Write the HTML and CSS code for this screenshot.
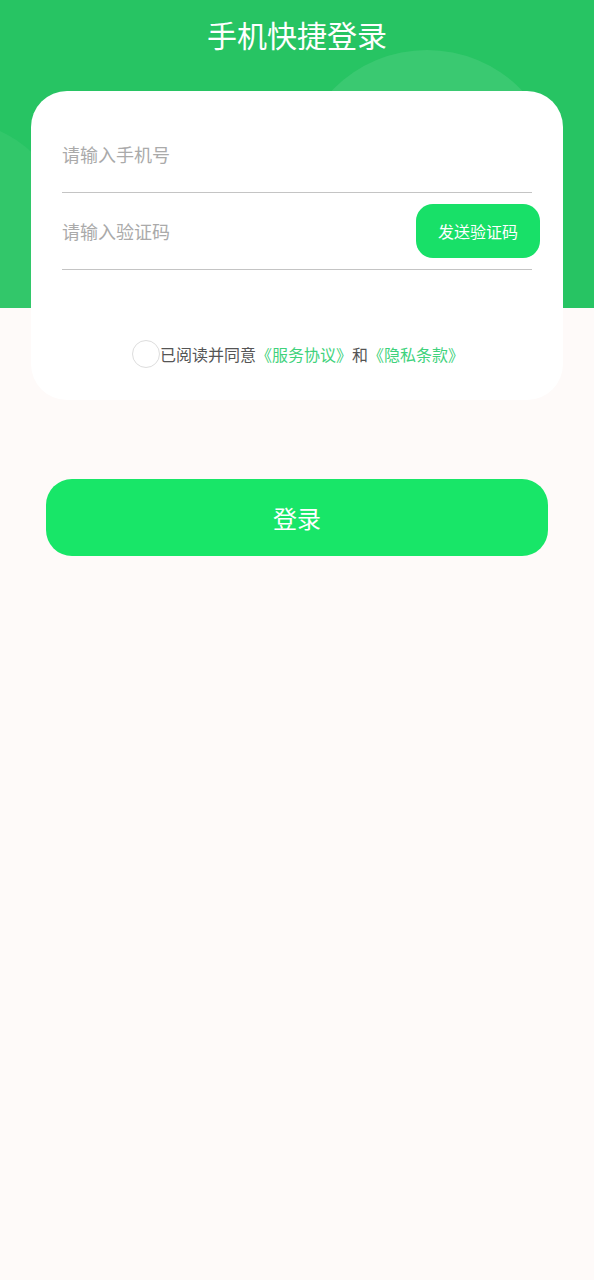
FILE: index.html
```html
<!DOCTYPE html>
<html lang="zh-CN">
<head>
    <meta charset="UTF-8">
    <meta name="viewport" content="width=device-width, initial-scale=1.0">
    <title>手机快捷登录</title>
    <link rel="stylesheet" href="styles.css">
</head>
<body>
    <header class="top">
        <span class="bubble bubble-right"></span>
        <span class="bubble bubble-left"></span>
        <h1>手机快捷登录</h1>
    </header>
    <main>
        <div class="card">
            <div class="field">
                <input type="text" placeholder="请输入手机号" />
            </div>
            <div class="field">
                <input type="text" placeholder="请输入验证码" />
                <button class="send-code">发送验证码</button>
            </div>
            <div class="agree">
                <span class="check"></span>
                <span>已阅读并同意<a href="#">《服务协议》</a>和<a href="#">《隐私条款》</a></span>
            </div>
        </div>
        <button class="login">登录</button>
    </main>
</body>
</html>
```

FILE: styles.css
```css
body {
    margin: 0;
    font-family: "Noto Sans CJK SC", "Noto Sans", sans-serif;
    background-color: #fefaf9;
}
.top {
    position: relative;
    height: 308px;
    background-color: #27c463;
    overflow: hidden;
}
.top h1 {
    position: relative;
    margin: 0;
    padding-top: 12px;
    text-align: center;
    color: white;
    font-size: 30px;
    font-weight: normal;
    line-height: 44px;
}
.bubble {
    position: absolute;
    border-radius: 50%;
    background: rgba(255,255,255,0.09);
}
.bubble-right {
    left: 295px;
    top: 50px;
    width: 264px;
    height: 264px;
}
.bubble-left {
    left: -170px;
    top: 120px;
    width: 240px;
    height: 240px;
    background: rgba(255,255,255,0.05);
}
main {
    position: relative;
    margin-top: -217px;
    padding: 0 31px;
}
.card {
    background: white;
    border-radius: 36px;
    padding: 25px 31px 34px;
    height: 250px;
}
.field {
    display: flex;
    align-items: center;
    height: 76px;
    border-bottom: 1px solid #c4c4c4;
}
.field input {
    flex: 1;
    min-width: 0;
    border: none;
    outline: none;
    padding: 0;
    font-family: inherit;
    font-size: 18px;
    color: #333;
    background: none;
}
.field input::placeholder {
    color: #aaaaaa;
}
.send-code {
    width: 124px;
    height: 54px;
    margin-right: -8px;
    border: none;
    border-radius: 17px;
    background-color: #18e068;
    color: white;
    font-family: inherit;
    font-size: 16px;
    cursor: pointer;
}
.agree {
    display: flex;
    align-items: center;
    justify-content: center;
    margin-top: 70px;
    font-size: 16px;
    color: #555;
}
.check {
    width: 26px;
    height: 26px;
    margin-left: 2px;
    border: 1.5px solid #dddddd;
    border-radius: 50%;
}
.agree a {
    color: #3fd27c;
    text-decoration: none;
}
.login {
    display: block;
    width: 502px;
    height: 77px;
    margin: 79px auto 0;
    border: none;
    border-radius: 26px;
    background-color: #18e668;
    color: white;
    font-family: inherit;
    font-size: 24px;
    line-height: 1;
    cursor: pointer;
}
```
